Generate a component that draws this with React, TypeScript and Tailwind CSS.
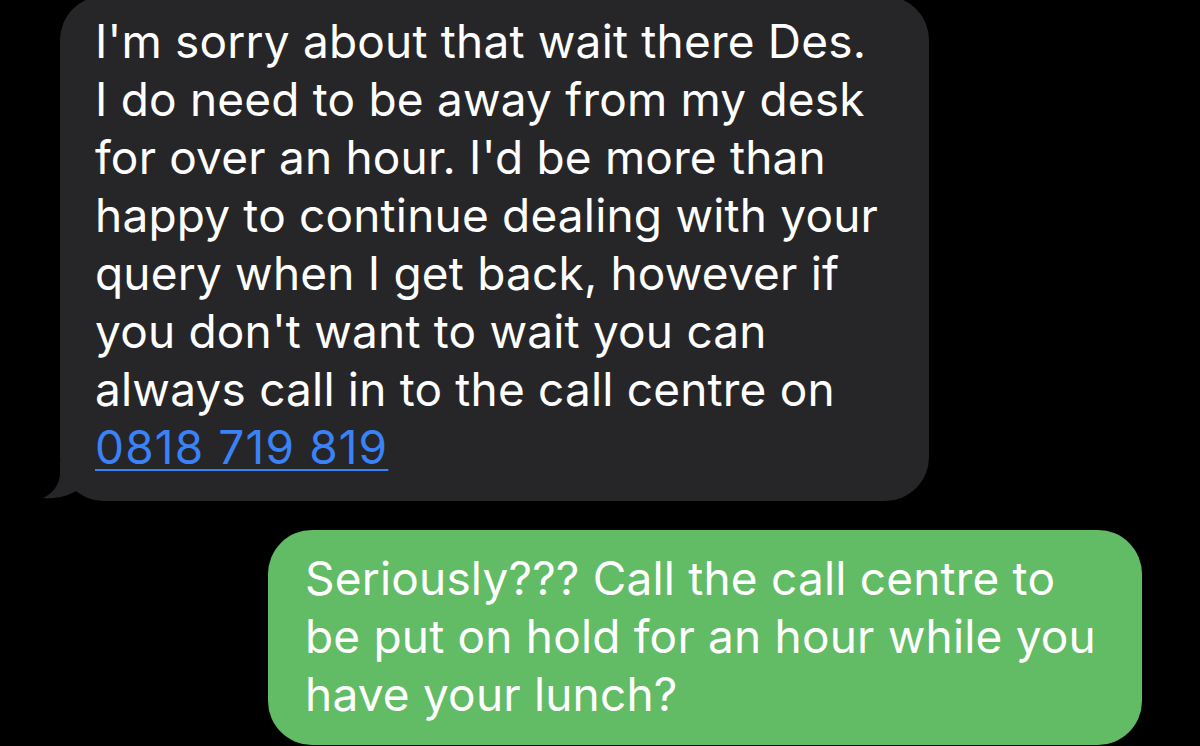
const grayLines = [
  "I'm sorry about that wait there Des.",
  "I do need to be away from my desk",
  "for over an hour. I'd be more than",
  "happy to continue dealing with your",
  "query when I get back, however if",
  "you don't want to wait you can",
  "always call in to the call centre on",
];

const greenLines = [
  "Seriously??? Call the call centre to",
  "be put on hold for an hour while you",
  "have your lunch?",
];

const BubbleTail = () => (
  <svg
    className="absolute bottom-0 left-[-18px]"
    width="50"
    height="40"
    viewBox="0 0 50 40"
  >
    <path
      d="M18 0 L18 12 C18 24 10 33 1 37 C12 38 24 36 34 30 C40 34 46 37 50 38 L50 0 Z"
      fill="#262628"
    />
  </svg>
);

export default function App() {
  return (
    <div
      className="flex h-[746px] w-[1200px] flex-col overflow-hidden bg-black text-[46px] leading-[58px] tracking-[0.004em] text-white"
      style={{ fontFamily: "Inter, 'Liberation Sans', sans-serif" }}
    >
      <div className="relative -mt-[4px] ml-[60px] w-[869px] rounded-[44px] bg-[#262628] pb-[25px] pl-[35px] pt-[16px]">
        {grayLines.map((line) => (
          <div key={line} className="whitespace-nowrap">
            {line}
          </div>
        ))}
        <div className="whitespace-nowrap">
          <a
            href="#"
            className="tracking-[0.025em] text-[#3a82f7] underline decoration-[2px] underline-offset-[5px]"
          >
            0818 719 819
          </a>
        </div>
        <BubbleTail />
      </div>

      <div className="ml-[268px] mt-[29px] w-[874px] rounded-[44px] bg-[#62bb65] pb-[22px] pl-[37px] pt-[19px]">
        {greenLines.map((line) => (
          <div key={line} className="whitespace-nowrap">
            {line}
          </div>
        ))}
      </div>
    </div>
  );
}
